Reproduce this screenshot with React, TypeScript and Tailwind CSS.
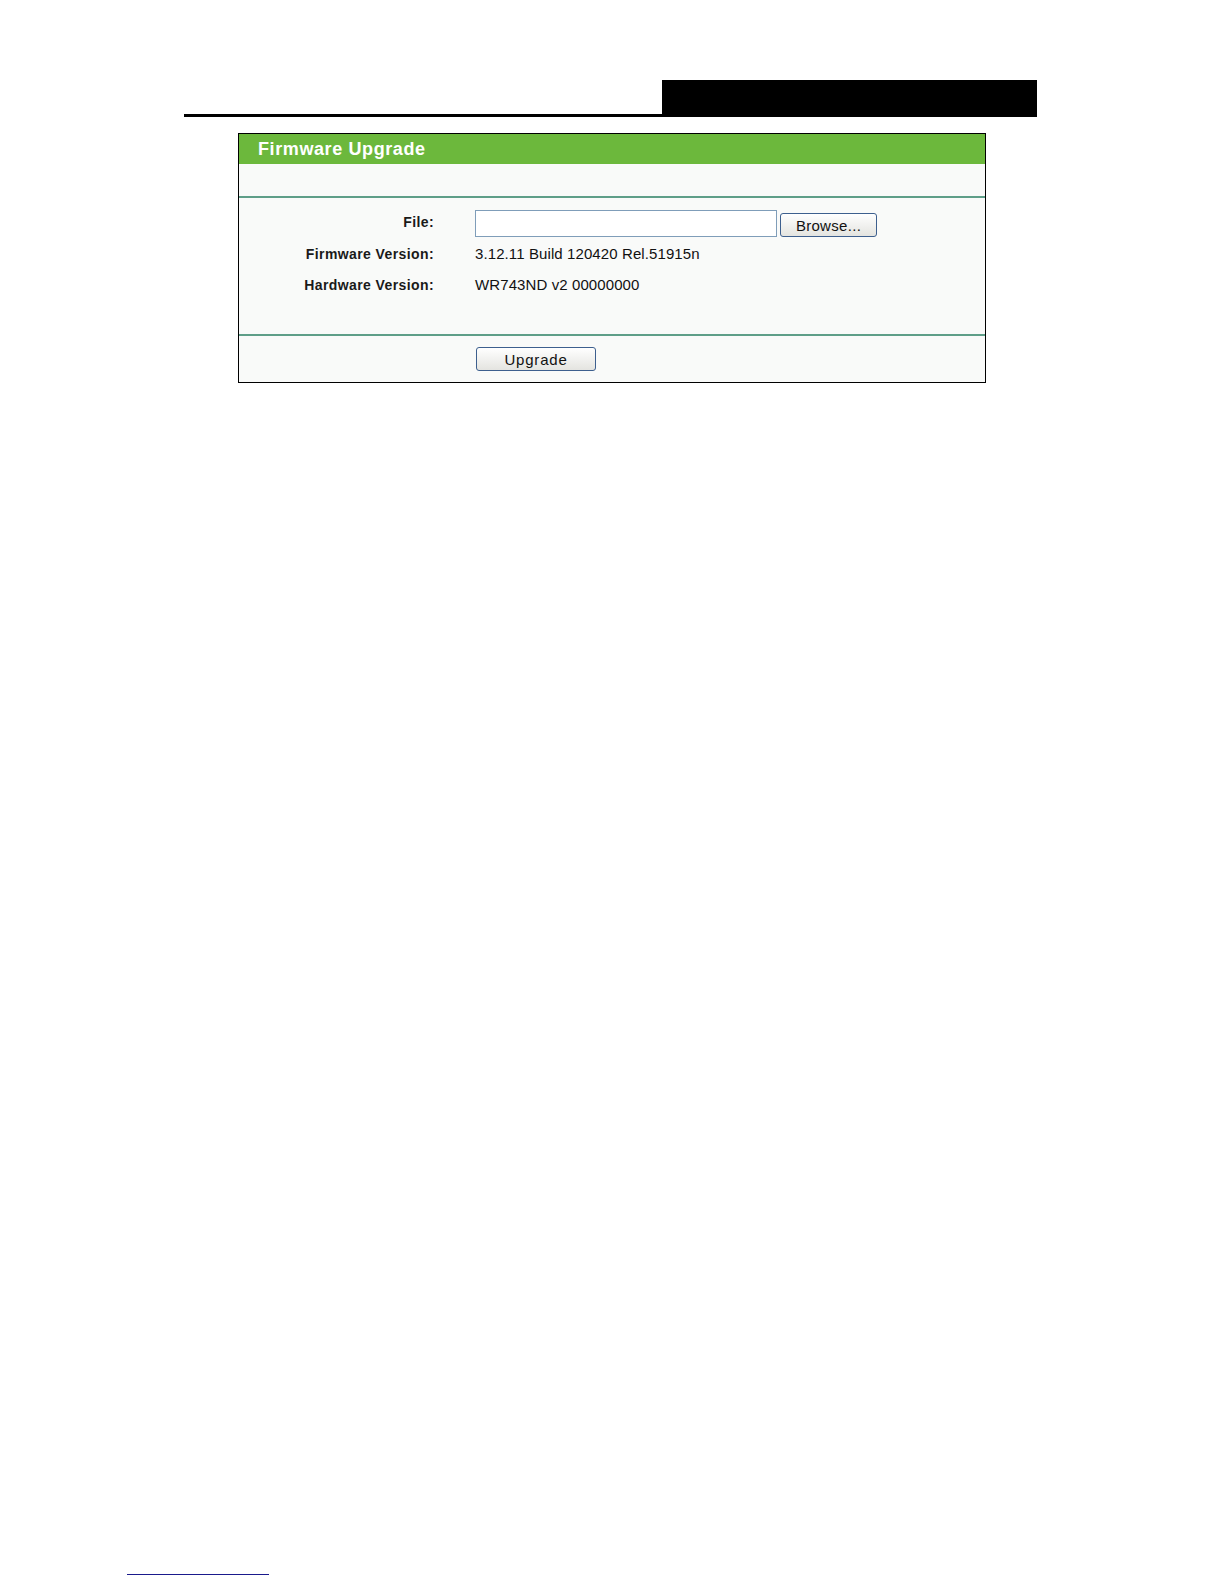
import React from "react";

const rows = [
  { label: "Firmware Version:", value: "3.12.11 Build 120420 Rel.51915n" },
  { label: "Hardware Version:", value: "WR743ND v2 00000000" },
];

const btn =
  "h-[24px] rounded-[3px] border border-[#3d5f8e] bg-gradient-to-b from-[#ffffff] to-[#e4e4e0] text-[15px] text-[#111] leading-none";

export default function App() {
  return (
    <div className="min-h-[1584px] w-[1224px] bg-white font-['Liberation_Sans',Arial,sans-serif]">
      {/* Page header */}
      <div className="flex items-end pt-[80px] pl-[184px] w-[1037px]">
        <div className="flex-1 border-b-[3px] border-black" />
        <div className="w-[375px] h-[37px] bg-black" />
      </div>

      {/* Firmware Upgrade panel */}
      <div className="mt-[16px] ml-[238px] w-[748px] border border-black bg-[#f9faf9]">
        <div className="h-[30px] bg-[#6cb83c] flex items-center pl-[19px] text-white text-[18px] font-bold tracking-[0.6px]">
          Firmware Upgrade
        </div>
        <div className="h-[32px]" />
        <div className="h-[2px] bg-[#5e9e88]" />

        <div className="pt-[10px] pb-[33px]">
          <div className="flex items-center h-[31px]">
            <div className="w-[195px] text-right text-[14px] font-bold tracking-[0.4px] text-[#1a1a1a] -mt-[3px]">
              File:
            </div>
            <div className="ml-[41px] flex items-center">
              <input
                type="text"
                className="w-[302px] h-[27px] border border-[#7f9db9] bg-white outline-none"
              />
              <button className={`${btn} tracking-[0.3px] ml-[3px] w-[97px] mt-[3px]`}>Browse...</button>
            </div>
          </div>
          {rows.map((r) => (
            <div key={r.label} className="flex items-center h-[31px]">
              <div className="w-[195px] text-right text-[14px] font-bold tracking-[0.4px] text-[#1a1a1a]">
                {r.label}
              </div>
              <div className="ml-[41px] text-[15px] tracking-[0.1px] text-[#111]">{r.value}</div>
            </div>
          ))}
        </div>

        <div className="h-[2px] bg-[#5e9e88]" />
        <div className="h-[46px] flex items-center pl-[237px]">
          <button className={`${btn} tracking-[0.8px] w-[120px]`}>Upgrade</button>
        </div>
      </div>

      {/* Footer rule */}
      <div className="mt-[1191px] ml-[127px] w-[142px] h-[1px] bg-[#1a1a8c]" />
    </div>
  );
}
